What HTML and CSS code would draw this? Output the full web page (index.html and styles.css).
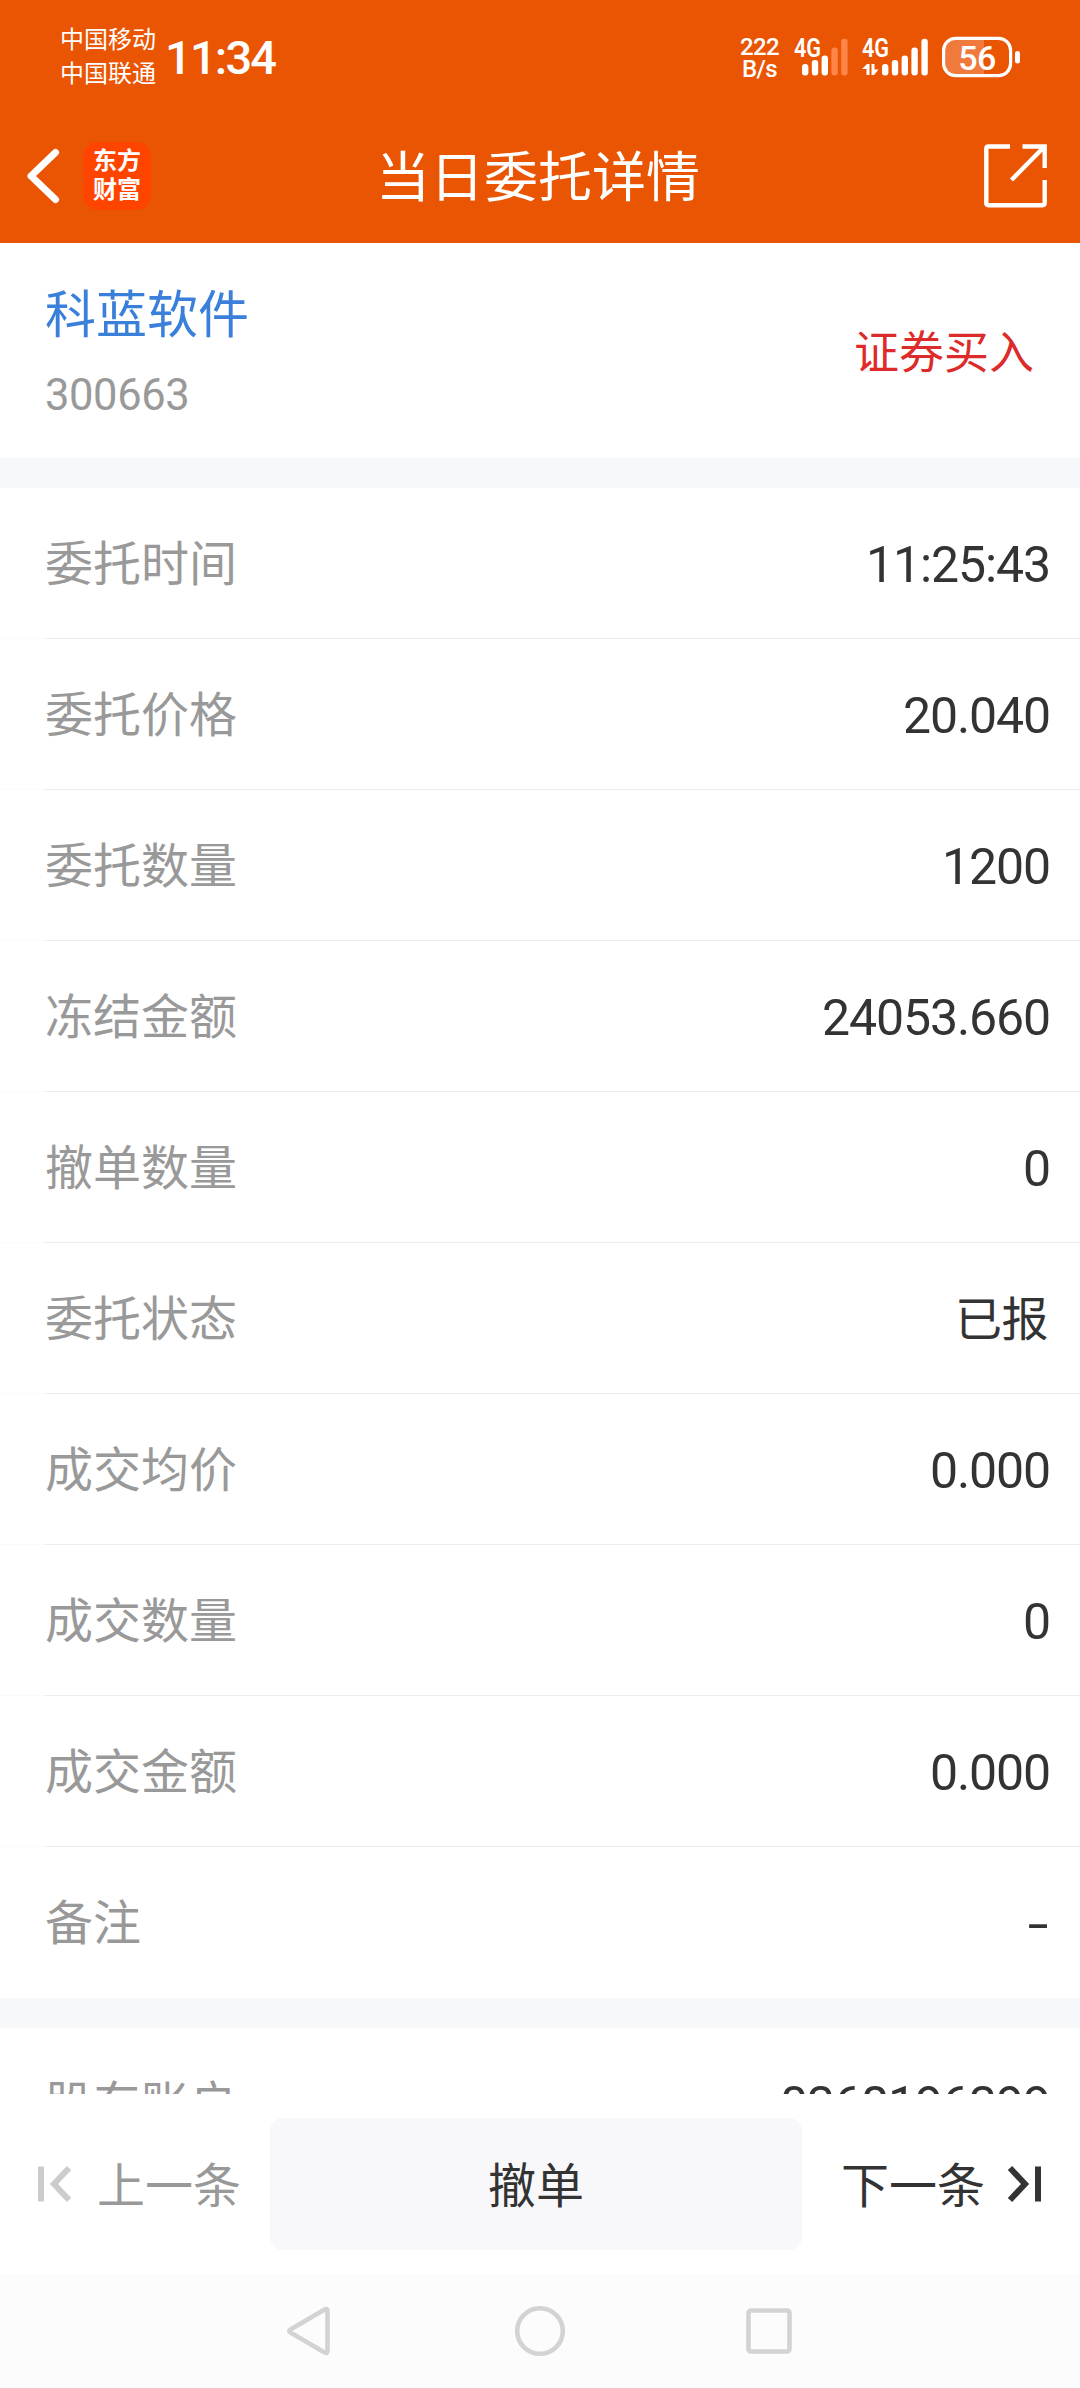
FILE: index.html
```html
<!DOCTYPE html>
<html lang="zh-CN">

<head>
  <meta charset="UTF-8">
  <meta name="viewport" content="width=device-width, initial-scale=1.0">
  <title>当日委托详情</title>
  <link rel="stylesheet" href="styles.css">
</head>

<body>
  <div class="phone">
    <header class="header">
      <!-- Status bar -->
      <div class="status-bar">
        <div class="carriers">
          <span>中国移动</span>
          <span>中国联通</span>
        </div>
        <div class="clock">11:34</div>
        <div class="net-speed">
          <span>222</span>
          <span>B/s</span>
        </div>
        <svg class="signal" width="56" height="54" viewBox="794 30 56 54">
          <text x="795" y="57" textLength="27" lengthAdjust="spacingAndGlyphs">4G</text>
          <rect x="803" y="64" width="6.4" height="11.5" rx="3" />
          <rect x="812.8" y="60" width="6.4" height="15.5" rx="3" />
          <rect x="822.6" y="55.5" width="6.4" height="20" rx="3" />
          <rect class="off" x="832.4" y="47.5" width="6.4" height="28" rx="3" />
          <rect class="off" x="842.2" y="38.7" width="6.4" height="36.8" rx="3" />
        </svg>
        <svg class="signal signal-2" width="70" height="54" viewBox="861 30 70 54">
          <text x="863" y="57" textLength="27" lengthAdjust="spacingAndGlyphs">4G</text>
          <path d="M863 69L868 64H870.5V75H867.5V69ZM872.5 64H875.5V69.5H879.5L875 75H872.5Z" />
          <rect x="883" y="64" width="6.4" height="11.5" rx="3" />
          <rect x="892.8" y="60" width="6.4" height="15.5" rx="3" />
          <rect x="902.6" y="55.5" width="6.4" height="20" rx="3" />
          <rect x="912.4" y="47.5" width="6.4" height="28" rx="3" />
          <rect x="922.4" y="38.7" width="6.4" height="36.8" rx="3" />
        </svg>
        <svg class="battery" width="80" height="42" viewBox="942 36 80 42">
          <path class="level" d="M957 40H985V74H957A11 11 0 0 1 946 63V51A11 11 0 0 1 957 40Z" />
          <rect class="shell" x="944.6" y="38.4" width="67" height="37.2" rx="12" />
          <rect x="1016" y="51" width="5" height="12.5" rx="2.5" />
          <text x="978" y="69.5" text-anchor="middle">56</text>
        </svg>
      </div>

      <!-- Title bar -->
      <div class="title-bar">
        <div class="title-left">
          <svg width="36" height="58" viewBox="0 0 36 58">
            <path d="M30.5 5.5L6 29L30.5 52.5" fill="none" stroke="#fff" stroke-width="7" stroke-linecap="round" stroke-linejoin="round" />
          </svg>
          <div class="logo">东方<br>财富</div>
        </div>
        <h1>当日委托详情</h1>
        <svg class="share" width="64" height="64" viewBox="0 0 64 64">
          <path d="M26 2.5H4.5Q2.3 2.5 2.3 4.7V59Q2.3 61.2 4.5 61.2H58.5Q60.7 61.2 60.7 59V36" />
          <path d="M38.5 2.5H60.7V24M60 3L27.5 36" />
        </svg>
      </div>
    </header>

    <main class="content">
      <section class="stock">
        <div class="stock-info">
          <div class="stock-name">科蓝软件</div>
          <div class="stock-code">300663</div>
        </div>
        <div class="side">证券买入</div>
      </section>

      <section class="group">
        <div class="row"><span>委托时间</span><b>11:25:43</b></div>
        <div class="row"><span>委托价格</span><b>20.040</b></div>
        <div class="row"><span>委托数量</span><b>1200</b></div>
        <div class="row"><span>冻结金额</span><b>24053.660</b></div>
        <div class="row"><span>撤单数量</span><b>0</b></div>
        <div class="row"><span>委托状态</span><b class="cn">已报</b></div>
        <div class="row"><span>成交均价</span><b>0.000</b></div>
        <div class="row"><span>成交数量</span><b>0</b></div>
        <div class="row"><span>成交金额</span><b>0.000</b></div>
        <div class="row"><span>备注</span><b class="dash">-</b></div>
      </section>

      <section class="group">
        <div class="row"><span>股东账户</span><b>0368196399</b></div>
      </section>
    </main>

    <!-- Bottom actions -->
    <footer class="actions">
      <div class="prev">
        <svg width="36" height="38" viewBox="0 0 36 38">
          <path d="M4 1.5V36.5M32 3L17 19L32 35" />
        </svg>
        <span>上一条</span>
      </div>
      <button type="button"><span>撤单</span></button>
      <div class="next">
        <span>下一条</span>
        <svg width="36" height="38" viewBox="0 0 36 38">
          <path d="M32 1.5V36.5M4 3L19 19L4 35" />
        </svg>
      </div>
    </footer>

    <!-- System navigation -->
    <nav class="nav">
      <svg width="52" height="52" viewBox="0 0 52 52">
        <path d="M39.5 4.5Q42.500 3 42.500 6V46Q42.500 49 39.500 47.500L5.500 27.500Q3 26 5.500 24.500Z" />
      </svg>
      <svg width="52" height="52" viewBox="0 0 52 52">
        <circle cx="26" cy="26" r="22.8" />
      </svg>
      <svg width="52" height="52" viewBox="0 0 52 52">
        <rect x="5.500" y="5.500" width="41" height="41" rx="2.500" />
      </svg>
    </nav>
  </div>
</body>

</html>
```

FILE: styles.css
```css
* {
  box-sizing: border-box;
}

body {
  margin: 0;
  font-family: Roboto, "Noto Sans CJK SC", sans-serif;
  background-color: #fff;
  color: #333;
}

svg {
  display: block;
  flex: none;
}

.phone {
  width: 1080px;
  height: 2388px;
  display: flex;
  flex-direction: column;
  overflow: hidden;
}

/* Header */
.header {
  height: 243px;
  flex: none;
  background-color: #ea5504;
  color: #fff;
}

.status-bar {
  height: 112px;
  display: flex;
  align-items: center;
  padding: 2px 59px 0 60px;
}

.carriers {
  display: flex;
  flex-direction: column;
  font-size: 24px;
  line-height: 34px;
}

.clock {
  margin-left: 9px;
  padding-top: 2px;
  font-size: 47px;
  font-weight: 500;
  line-height: 68px;
  letter-spacing: -1.8px;
}

.net-speed {
  display: flex;
  flex-direction: column;
  align-items: center;
  margin-left: auto;
  margin-right: 14px;
  padding-top: 2px;
  font-size: 24px;
  font-weight: 500;
  line-height: 22.5px;
  letter-spacing: -0.6px;
}

.signal {
  fill: #fff;
  font-size: 25px;
  font-weight: 600;
}

.signal .off {
  fill: #ff8549;
}

.signal-2 {
  margin-left: 11px;
}

.battery {
  margin-left: 11px;
  fill: #fff;
  font-size: 34px;
  font-weight: 500;
  letter-spacing: -0.5px;
}

.battery .level {
  fill: #ef7a3c;
}

.battery .shell {
  fill: none;
  stroke: #fff;
  stroke-width: 3.2;
}

.title-bar {
  height: 128px;
  display: grid;
  grid-template-columns: 1fr auto 1fr;
  align-items: center;
  padding: 0 32px 0 25px;
}

.title-left {
  display: flex;
  align-items: center;
  gap: 22px;
}

.logo {
  width: 68px;
  height: 68px;
  padding-top: 2px;
  border-radius: 15px;
  background-color: #ff4400;
  font-family: "Noto Sans CJK SC", sans-serif;
  font-size: 24px;
  font-weight: 700;
  line-height: 29px;
  text-align: center;
}

h1 {
  margin: 0;
  padding: 6px 0 0 3px;
  font-size: 54px;
  font-weight: 400;
  line-height: 80px;
}

.share {
  justify-self: end;
  fill: none;
  stroke: #fff;
  stroke-width: 4.4;
}

/* Order details */
.content {
  height: 1851px;
  flex: none;
  overflow: hidden;
}

.stock {
  height: 215px;
  display: flex;
  justify-content: space-between;
  align-items: center;
  padding: 0 46px 0 45px;
}

.stock-info {
  padding-top: 10px;
}

.stock-name {
  font-size: 51px;
  line-height: 80px;
  color: #3a80db;
}

.stock-code {
  font-size: 43.5px;
  line-height: 80px;
  letter-spacing: -0.4px;
  color: #999;
}

.side {
  padding-bottom: 3px;
  font-size: 45px;
  color: #dd2b2b;
}

.group {
  border-top: 30px solid #f7f8fa;
  background: linear-gradient(to right, #fafafa 45px, #ededed 45px);
}

.row {
  height: 150px;
  display: flex;
  justify-content: space-between;
  align-items: center;
  margin-bottom: 1px;
  padding: 0 30px 0 45px;
  background-color: #fff;
}

.group::after {
  content: "";
  display: block;
}

.row span {
  padding-bottom: 6px;
  font-size: 48px;
  color: #999;
}

.row b {
  padding-top: 3px;
  font-size: 50px;
  font-weight: 400;
  letter-spacing: -1.1px;
}

.row .cn {
  padding: 0 2px 5px 0;
  font-size: 47px;
  letter-spacing: -0.5px;
}

.row .dash {
  margin-right: 3px;
  transform: scaleX(1.5);
  transform-origin: right;
}

/* Bottom actions */
.actions {
  height: 180px;
  flex: none;
  display: flex;
  align-items: center;
  padding: 0 38px 0 37px;
  font-size: 48px;
}

.actions svg {
  fill: none;
  stroke-width: 6;
}

.actions span {
  display: block;
  padding-bottom: 5px;
}

.actions button {
  width: 532px;
  height: 132px;
  margin-left: 29px;
  border: none;
  border-radius: 13px;
  background-color: #f8f8fb;
  color: #333;
  font-family: inherit;
  font-size: 48px;
}

.prev,
.next {
  display: flex;
  align-items: center;
  gap: 24px;
}

.prev {
  color: #999;
}

.prev svg {
  stroke: #ccc;
}

.next {
  gap: 21px;
  margin-left: auto;
}

.next svg {
  stroke: #333;
}

/* System navigation */
.nav {
  height: 114px;
  flex: none;
  display: flex;
  justify-content: center;
  align-items: center;
  gap: 177px;
  background-color: #fcfcfc;
}

.nav svg {
  fill: none;
  stroke: #d3d3d3;
  stroke-width: 4.6;
}
```
